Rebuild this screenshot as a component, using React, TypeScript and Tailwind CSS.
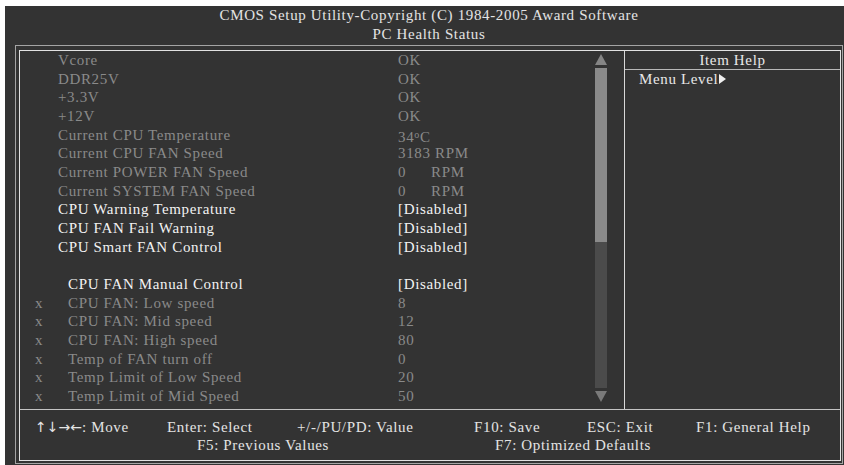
import React from "react";

type Row = {
  label?: string;
  value?: React.ReactNode;
  tone?: "dim" | "bright";
  indent?: boolean;
  mark?: boolean;
};

const rpm = (n: string) => (
  <span className="flex">
    <span className="inline-block w-[33px]">{n}</span>
    <span>RPM</span>
  </span>
);

const rows: Row[] = [
  { label: "Vcore", value: "OK", tone: "dim" },
  { label: "DDR25V", value: "OK", tone: "dim" },
  { label: "+3.3V", value: "OK", tone: "dim" },
  { label: "+12V", value: "OK", tone: "dim" },
  { label: "Current CPU Temperature", value: <span>34<span className="text-[10px] align-[4px]">o</span>C</span>, tone: "dim" },
  { label: "Current CPU FAN Speed", value: "3183 RPM", tone: "dim" },
  { label: "Current POWER FAN Speed", value: rpm("0"), tone: "dim" },
  { label: "Current SYSTEM FAN Speed", value: rpm("0"), tone: "dim" },
  { label: "CPU Warning Temperature", value: "[Disabled]", tone: "bright" },
  { label: "CPU FAN Fail Warning", value: "[Disabled]", tone: "bright" },
  { label: "CPU Smart FAN Control", value: "[Disabled]", tone: "bright" },
  {},
  { label: "CPU FAN Manual Control", value: "[Disabled]", tone: "bright", indent: true },
  { label: "CPU FAN: Low speed", value: "8", tone: "dim", indent: true, mark: true },
  { label: "CPU FAN: Mid speed", value: "12", tone: "dim", indent: true, mark: true },
  { label: "CPU FAN: High speed", value: "80", tone: "dim", indent: true, mark: true },
  { label: "Temp of FAN turn off", value: "0", tone: "dim", indent: true, mark: true },
  { label: "Temp Limit of Low Speed", value: "20", tone: "dim", indent: true, mark: true },
  { label: "Temp Limit of Mid Speed", value: "50", tone: "dim", indent: true, mark: true },
];

const Scrollbar = () => (
  <div className="w-[12px] flex flex-col pt-[3px]">
    <svg width="12" height="11" viewBox="0 0 12 11">
      <polygon points="6,0 12,11 0,11" fill="#858585" />
    </svg>
    <div className="h-[3px]" />
    <div className="h-[174px] bg-[#8a8a8a]" />
    <div className="h-[146px] bg-[#4b4b4b]" />
    <div className="h-[3px]" />
    <svg width="12" height="11" viewBox="0 0 12 11">
      <polygon points="0,0 12,0 6,11" fill="#7a7a7a" />
    </svg>
  </div>
);

export default function App() {
  return (
    <div className="min-h-screen bg-white pt-[6px] pl-[5px]">
      <div
        className="w-[839px] h-[459px] bg-[#333333] text-[15px] tracking-[0.65px] whitespace-nowrap"
        style={{ fontFamily: '"Liberation Serif", "Times New Roman", serif' }}
      >
        <div className="ml-[10px] pr-[1px]">
          <div className="h-[39px] text-center text-[#e4e4e4] leading-[18.5px]">
            <div>CMOS Setup Utility-Copyright (C) 1984-2005 Award Software</div>
            <div>PC Health Status</div>
          </div>

          <div className="w-[828px] h-[419px] border border-[#a4a4a4] pt-[4px] pl-[3px] pr-[1px] pb-[2px]">
            <div className="h-full border border-[#e2e2e2] flex flex-col">
              <div className="h-[359px] shrink-0 flex border-b border-[#c4c4c4]">
                {/* settings list */}
                <div className="w-[605px] flex border-r border-[#d8d8d8]">
                  <div className="w-[575px] leading-[18.67px]">
                    {rows.map((r, i) => (
                      <div
                        key={i}
                        className={`flex h-[18.67px] ${r.tone === "bright" ? "text-[#f2f2f2]" : "text-[#8a8a8a]"}`}
                      >
                        <span className="w-[15px] shrink-0" />
                        <span className="w-[23px] shrink-0">{r.mark ? "x" : ""}</span>
                        {r.indent && <span className="w-[10px] shrink-0" />}
                        <span className={r.indent ? "w-[330px] shrink-0" : "w-[340px] shrink-0"}>{r.label}</span>
                        <span>{r.value}</span>
                      </div>
                    ))}
                  </div>
                  <Scrollbar />
                </div>

                {/* item help */}
                <div className="flex-1 text-[#e8e8e8] leading-[18.67px]">
                  <div className="h-[19px] text-center border-b border-[#b8b8b8]">Item Help</div>
                  <div className="pl-[14px] flex items-center">
                    <span>Menu Level</span>
                    <svg width="7" height="10" viewBox="0 0 7 10" className="ml-[1px]">
                      <polygon points="0,0 7,5 0,10" fill="#f0f0f0" />
                    </svg>
                  </div>
                </div>
              </div>

              {/* key legend */}
              <div className="flex-1 pt-[8px] text-[#e4e4e4] leading-[18px]">
                <div className="flex pl-[15px]">
                  <span className="w-[132px] shrink-0">
                    <span style={{ fontFamily: '"DejaVu Sans", sans-serif' }} className="text-[14px] tracking-[0px]">↑↓→←</span>: Move
                  </span>
                  <span className="w-[130px] shrink-0">Enter: Select</span>
                  <span className="w-[177px] shrink-0">+/-/PU/PD: Value</span>
                  <span className="w-[113px] shrink-0">F10: Save</span>
                  <span className="w-[109px] shrink-0">ESC: Exit</span>
                  <span>F1: General Help</span>
                </div>
                <div className="flex pl-[177px]">
                  <span className="w-[298px] shrink-0">F5: Previous Values</span>
                  <span>F7: Optimized Defaults</span>
                </div>
              </div>
            </div>
          </div>
        </div>
      </div>
    </div>
  );
}
